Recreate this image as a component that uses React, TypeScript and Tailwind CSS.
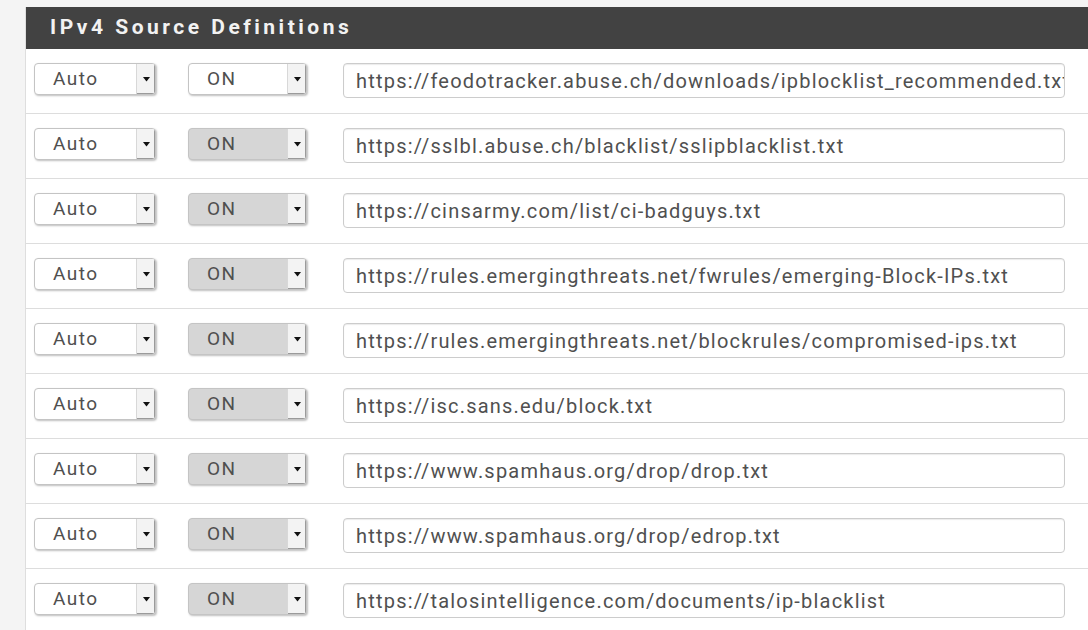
const feeds = [
  "https://feodotracker.abuse.ch/downloads/ipblocklist_recommended.txt",
  "https://sslbl.abuse.ch/blacklist/sslipblacklist.txt",
  "https://cinsarmy.com/list/ci-badguys.txt",
  "https://rules.emergingthreats.net/fwrules/emerging-Block-IPs.txt",
  "https://rules.emergingthreats.net/blockrules/compromised-ips.txt",
  "https://isc.sans.edu/block.txt",
  "https://www.spamhaus.org/drop/drop.txt",
  "https://www.spamhaus.org/drop/edrop.txt",
  "https://talosintelligence.com/documents/ip-blacklist",
];

const Arrow = () => (
  <svg width="7" height="5" viewBox="0 0 7 5" className="block">
    <path d="M0 0h7L3.5 4.5z" fill="#111" />
  </svg>
);

const Select = ({
  label,
  width,
  grey,
}: {
  label: string;
  width: string;
  grey?: boolean;
}) => (
  <div
    className={`${width} flex h-[32px] shrink-0 overflow-hidden rounded-[4px] border border-[#c4c4c4] shadow-[1px_1px_2px_rgba(0,0,0,0.25)] ${
      grey ? "bg-[#d6d6d6]" : "bg-white"
    }`}
  >
    <div className="flex flex-1 items-center pl-[18px] text-[19px] tracking-[1.5px] text-[#4f4f4f]">
      {label}
    </div>
    <div className="flex w-[19px] items-center justify-center border-l border-[#d8d8d8] bg-[#f3f3f3] shadow-[inset_-1px_-1px_0_#9a9a9a]">
      <Arrow />
    </div>
  </div>
);

export default function App() {
  return (
    <div
      className="h-[630px] w-[1088px] overflow-hidden bg-[#f4f4f4] pl-[25px] pt-[7px]"
      style={{ fontFamily: "Roboto, 'Noto Sans', sans-serif" }}
    >
      <div className="h-full border-l border-[#dedede] bg-white">
        <div className="flex h-[42px] items-center bg-[#424242] pl-[24px] text-[21px] font-bold tracking-[3.5px] text-[#f2f2f2]">
          IPv4 Source Definitions
        </div>
        {feeds.map((url, i) => (
          <div
            key={url}
            className="flex items-start border-b border-[#dddddd] pb-[15px] pl-[8px] pr-[23px] pt-[14px]"
          >
            <Select label="Auto" width="w-[122px]" />
            <div className="ml-[32px]">
              <Select label="ON" width="w-[119px]" grey={i > 0} />
            </div>
            <div className="ml-[36px] flex h-[35px] min-w-0 flex-1 items-center overflow-hidden rounded-[4px] border border-[#cccccc] pl-[12px] shadow-[inset_0_1px_1px_rgba(0,0,0,0.08)]">
              <span className="whitespace-nowrap text-[20px] tracking-[1.2px] text-[#505050]">
                {url}
              </span>
            </div>
          </div>
        ))}
      </div>
    </div>
  );
}
